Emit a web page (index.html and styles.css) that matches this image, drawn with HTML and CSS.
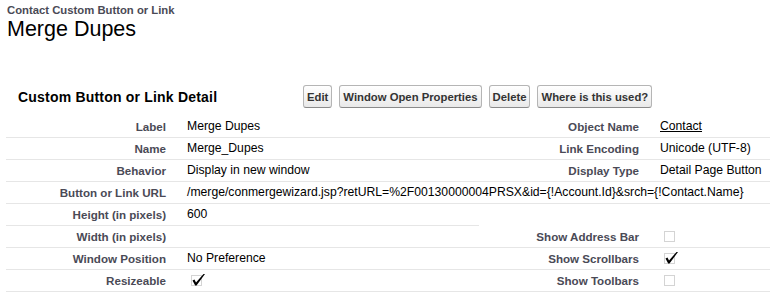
FILE: index.html
```html
<!doctype html>
<html lang="en">
<head>
    <meta charset="UTF-8">
    <title>Merge Dupes</title>
    <link rel="stylesheet" href="styles.css">
</head>
<body>
<div class="page">
    <div class="pageTitle">
        <h1 class="pageType">Contact Custom Button or Link</h1>
        <h2 class="pageDescription">Merge Dupes</h2>
    </div>

    <div class="pageBlock">
        <div class="pbHeader">
            <h2 class="pbTitle">Custom Button or Link Detail</h2>
            <div class="pbButtons">
                <button class="btn">Edit</button>
                <button class="btn">Window Open Properties</button>
                <button class="btn">Delete</button>
                <button class="btn">Where is this used?</button>
            </div>
        </div>

        <table class="detailList">
            <colgroup>
                <col class="colLabel">
                <col class="colData">
                <col class="colLabel">
                <col class="colDataRight">
            </colgroup>
            <tr>
                <td class="labelCol">Label</td>
                <td class="dataCol">Merge Dupes</td>
                <td class="labelCol">Object Name</td>
                <td class="dataCol"><a href="#" class="objLink">Contact</a></td>
            </tr>
            <tr>
                <td class="labelCol">Name</td>
                <td class="dataCol">Merge_Dupes</td>
                <td class="labelCol">Link Encoding</td>
                <td class="dataCol">Unicode (UTF-8)</td>
            </tr>
            <tr>
                <td class="labelCol">Behavior</td>
                <td class="dataCol">Display in new window</td>
                <td class="labelCol">Display Type</td>
                <td class="dataCol">Detail Page Button</td>
            </tr>
            <tr>
                <td class="labelCol">Button or Link URL</td>
                <td class="dataCol" colspan="3">/merge/conmergewizard.jsp?retURL=%2F00130000004PRSX&amp;id={!Account.Id}&amp;srch={!Contact.Name}</td>
            </tr>
            <tr>
                <td class="labelCol">Height (in pixels)</td>
                <td class="dataCol">600</td>
                <td class="labelCol empty"></td>
                <td class="dataCol empty"></td>
            </tr>
            <tr>
                <td class="labelCol">Width (in pixels)</td>
                <td class="dataCol"></td>
                <td class="labelCol">Show Address Bar</td>
                <td class="dataCol">
                    <svg class="checkImg" width="18" height="14" viewBox="0 0 18 14"><rect x="0.5" y="2.5" width="10" height="10" fill="none" stroke="#a8a8a8" stroke-dasharray="1 1"/></svg>
                </td>
            </tr>
            <tr>
                <td class="labelCol">Window Position</td>
                <td class="dataCol">No Preference</td>
                <td class="labelCol">Show Scrollbars</td>
                <td class="dataCol">
                    <svg class="checkImg" width="18" height="14" viewBox="0 0 18 14"><rect x="0.5" y="2.5" width="10" height="10" fill="none" stroke="#a8a8a8" stroke-dasharray="1 1"/><path d="M1.5 7.5 L3.5 6.5 L5 9.5 L12.5 1 L14 1 L5.5 12.5 L4.2 12.5 Z" fill="#000"/></svg>
                </td>
            </tr>
            <tr>
                <td class="labelCol">Resizeable</td>
                <td class="dataCol">
                    <svg class="checkImg" width="18" height="14" viewBox="0 0 18 14"><rect x="0.5" y="2.5" width="10" height="10" fill="none" stroke="#a8a8a8" stroke-dasharray="1 1"/><path d="M1.5 7.5 L3.5 6.5 L5 9.5 L12.5 1 L14 1 L5.5 12.5 L4.2 12.5 Z" fill="#000"/></svg>
                </td>
                <td class="labelCol">Show Toolbars</td>
                <td class="dataCol">
                    <svg class="checkImg" width="18" height="14" viewBox="0 0 18 14"><rect x="0.5" y="2.5" width="10" height="10" fill="none" stroke="#a8a8a8" stroke-dasharray="1 1"/></svg>
                </td>
            </tr>
        </table>
    </div>
</div>
</body>
</html>
```

FILE: styles.css
```css
body {
    margin: 0;
    background: #fff;
    font-family: "Liberation Sans", Arial, sans-serif;
    color: #000;
    overflow: hidden;
}
.page {
    padding: 4px 0 0 6px;
}
.pageTitle {
    padding-left: 1px;
}
.pageType {
    margin: 0;
    font-size: 11.3px;
    line-height: 13px;
    font-weight: bold;
    color: #4a4a56;
}
.pageDescription {
    margin: 0;
    font-size: 21.5px;
    line-height: 24px;
    font-weight: normal;
}

/* block header with title and buttons */
.pbHeader {
    display: flex;
    align-items: center;
    padding: 44px 0 8px 12px;
}
.pbTitle {
    width: 285px;
    margin: 0;
    font-size: 14px;
    letter-spacing: 0.2px;
    font-weight: bold;
    color: #000;
}
.pbButtons {
    display: flex;
    gap: 7px;
}
.btn {
    height: 23px;
    padding: 0 3px;
    font-family: "Liberation Sans", Arial, sans-serif;
    font-size: 11.3px;
    font-weight: bold;
    color: #333;
    background: linear-gradient(to bottom, #ffffff, #e9e9e9);
    border: 1px solid #b5b5b5;
    border-bottom-color: #8a8a8a;
    border-radius: 3px;
}

/* detail table */
.detailList {
    width: 764px;
    table-layout: fixed;
    border-collapse: collapse;
}
.colLabel { width: 170px; }
.colData { width: 303px; }
.colDataRight { width: 121px; }
.detailList td {
    height: 13px;
    padding: 4px 2px 4px 11px;
    line-height: 13px;
    border-bottom: 1px solid #e6e6e6;
    vertical-align: middle;
    white-space: nowrap;
}
.detailList td.labelCol {
    padding: 4px 10px 4px 2px;
    text-align: right;
    font-size: 11.6px;
    font-weight: bold;
    color: #4a4a56;
}
.detailList td.dataCol {
    font-size: 12.2px;
    color: #000;
}
.detailList td.empty {
    border-bottom: none;
}
.objLink {
    color: #000;
    text-decoration: underline;
}
.checkImg {
    display: block;
    margin: -1px 0 0 4px;
    margin-bottom: 0;
}
```
